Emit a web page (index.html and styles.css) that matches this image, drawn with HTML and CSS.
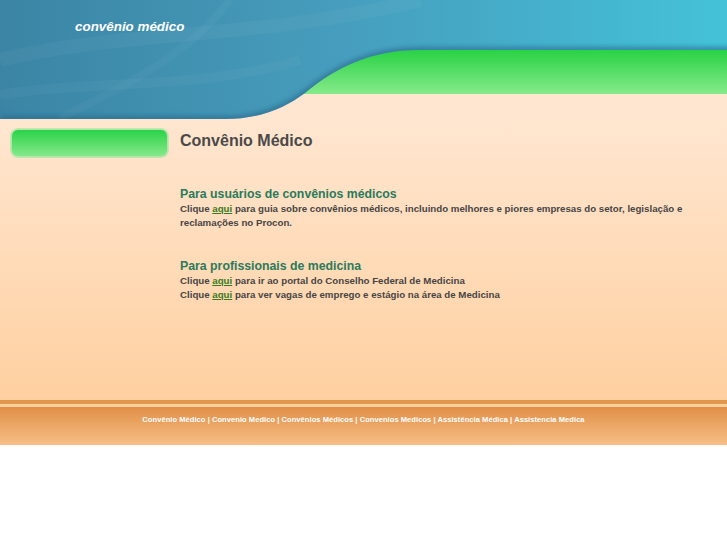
FILE: index.html
```html
<!DOCTYPE html>
<html lang="pt-BR">
<head>
  <meta charset="UTF-8">
  <title>Convênio Médico</title>
  <link rel="stylesheet" href="styles.css">
</head>
<body>

  <header class="topo">
    <svg class="topo-bg" width="727" height="120" viewBox="0 0 727 120" preserveAspectRatio="none">
      <defs>
        <linearGradient id="verde" x1="0" y1="0" x2="0" y2="1">
          <stop offset="0" stop-color="#29d245"/>
          <stop offset="1" stop-color="#86ea8a"/>
        </linearGradient>
        <linearGradient id="azul" x1="0" y1="0" x2="1" y2="0">
          <stop offset="0" stop-color="#3b84a4"/>
          <stop offset="0.45" stop-color="#469cbc"/>
          <stop offset="1" stop-color="#44c2d8"/>
        </linearGradient>
        <clipPath id="recorte">
          <path d="M0,0 H727 V50 H420 C370,50 335,68 305,93 C285,108 260,119 225,119 H0 Z"/>
        </clipPath>
        <filter id="borrao" x="-10%" y="-50%" width="120%" height="200%">
          <feGaussianBlur stdDeviation="2"/>
        </filter>
      </defs>
      <rect x="0" y="0" width="727" height="120" fill="#ffe6d0"/>
      <rect x="0" y="50" width="727" height="44" fill="url(#verde)"/>
      <path d="M0,0 H727 V50 H420 C370,50 335,68 305,93 C285,108 260,119 225,119 H0 Z" fill="url(#azul)"/>
      <g clip-path="url(#recorte)">
        <path d="M740,50 H420 C370,50 335,68 305,93 C285,108 260,119 225,119 H0" stroke="#276588" stroke-opacity="0.55" stroke-width="7" fill="none" filter="url(#borrao)"/>
        <path d="M0,60 C120,30 260,40 420,0" stroke="#ffffff" stroke-opacity="0.04" stroke-width="14" fill="none"/>
        <path d="M0,95 C90,80 200,90 300,60" stroke="#ffffff" stroke-opacity="0.035" stroke-width="10" fill="none"/>
        <path d="M230,0 C200,40 160,70 60,118" stroke="#ffffff" stroke-opacity="0.03" stroke-width="8" fill="none"/>
      </g>
    </svg>
    <div class="logo">convênio médico</div>
  </header>

  <main class="conteudo">
    <aside class="lateral">
      <div class="botao-verde"></div>
    </aside>

    <section class="texto">
      <h1>Convênio Médico</h1>

      <h2>Para usuários de convênios médicos</h2>
      <p>Clique <a href="#">aqui</a> para guia sobre convênios médicos, incluindo melhores e piores empresas do setor, legislação e reclamações no Procon.</p>

      <h2 class="segundo">Para profissionais de medicina</h2>
      <p>Clique <a href="#">aqui</a> para ir ao portal do Conselho Federal de Medicina<br>
      Clique <a href="#">aqui</a> para ver vagas de emprego e estágio na área de Medicina</p>
    </section>
  </main>

  <footer class="rodape">
    Convênio Médico | Convenio Medico | Convênios Médicos | Convenios Medicos | Assistência Médica | Assistencia Medica
  </footer>

</body>
</html>
```

FILE: styles.css
```css
body {
  margin: 0;
  padding: 0;
  background-color: #fff;
  font-family: "Liberation Sans", Arial, sans-serif;
}

.topo {
  position: relative;
  height: 120px;
  background-color: #ffe6d0;
  overflow: hidden;
}

.topo-bg {
  position: absolute;
  left: 0;
  top: 0;
  width: 100%;
  height: 120px;
}

.logo {
  position: relative;
  padding: 19px 0 0 75px;
  color: #fff;
  font-size: 13.4px;
  font-weight: bold;
  font-style: italic;
  line-height: 16px;
}

.conteudo {
  display: flex;
  height: 280px;
  background: linear-gradient(#ffe6d0, #ffd0a0);
}

.lateral {
  width: 180px;
  padding: 9px 0 0 11px;
  box-sizing: border-box;
}

.botao-verde {
  width: 157px;
  height: 28px;
  box-sizing: border-box;
  border: 1px solid #a8eaa4;
  border-radius: 7px;
  background: linear-gradient(#2bd248, #86e98a);
  box-shadow: 0 0 0 1px rgba(150, 225, 150, 0.5);
}

.texto {
  flex: 1;
  padding-top: 11px;
}

.texto h1 {
  margin: 0 0 35px 0;
  font-size: 16px;
  line-height: 20px;
  color: #4a4a4a;
}

.texto h2 {
  margin: 0;
  font-size: 12.3px;
  line-height: 16px;
  color: #2b7a5c;
}

.texto h2.segundo {
  margin-top: 28px;
}

.texto p {
  margin: 0;
  font-size: 9.7px;
  font-weight: bold;
  line-height: 14px;
  color: #464646;
  padding-right: 20px;
}

.texto a {
  color: #3b7a1e;
  text-decoration: underline;
}

.rodape {
  height: 41px;
  border-top: 4px solid #e2974f;
  background: linear-gradient(#ffcf9c 0, #ffcf9c 3px, #e08f47 3px, #f7bf87 100%);
  color: #fff;
  font-size: 7.5px;
  font-weight: bold;
  letter-spacing: 0.07px;
  text-align: center;
  line-height: 32px;
}
```
